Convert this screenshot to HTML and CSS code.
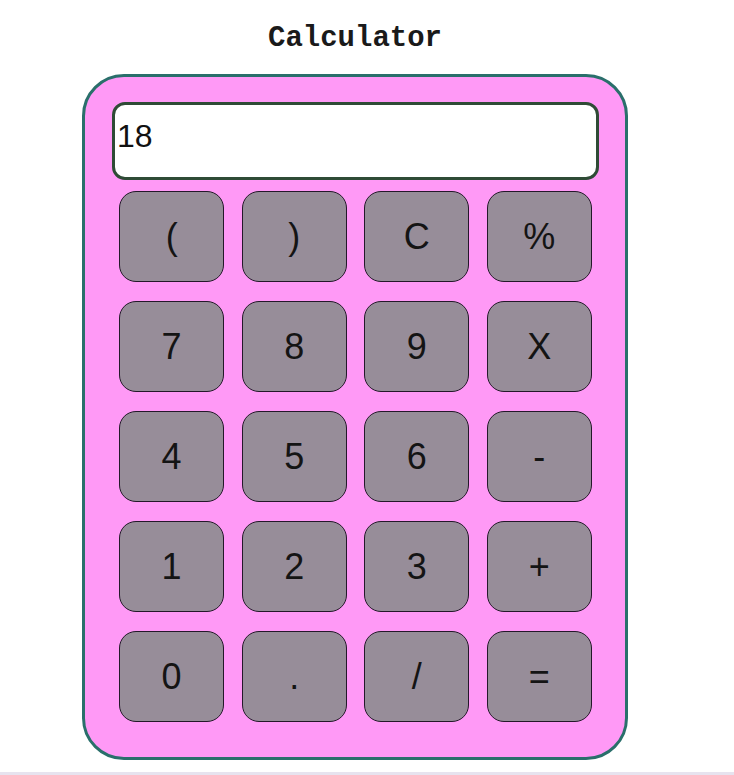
FILE: index.html
```html
<!DOCTYPE html>
<html lang="en">
<head>
<meta charset="utf-8">
<title>Calculator</title>
<link rel="stylesheet" href="styles.css">
</head>
<body>
<div class="page">
  <h1 class="title">Calculator</h1>
  <div class="calc">
    <div class="display">18</div>
    <div class="keys">
      <button class="key">(</button>
      <button class="key">)</button>
      <button class="key">C</button>
      <button class="key">%</button>
      <button class="key">7</button>
      <button class="key">8</button>
      <button class="key">9</button>
      <button class="key">X</button>
      <button class="key">4</button>
      <button class="key">5</button>
      <button class="key">6</button>
      <button class="key">-</button>
      <button class="key">1</button>
      <button class="key">2</button>
      <button class="key">3</button>
      <button class="key">+</button>
      <button class="key">0</button>
      <button class="key">.</button>
      <button class="key">/</button>
      <button class="key">=</button>
    </div>
  </div>
</div>
<div class="bar"></div>
</body>
</html>
```
FILE: styles.css
```css
html, body {
  margin: 0;
  padding: 0;
  background: #ffffff;
  overflow: hidden;
}
body {
  font-family: "Liberation Sans", Arial, sans-serif;
}
.page {
  width: 710px;
  display: flex;
  flex-direction: column;
  align-items: center;
  padding-top: 22px;
}
.title {
  margin: 0;
  font-family: "Liberation Mono", "Courier New", monospace;
  font-weight: bold;
  font-size: 29px;
  line-height: 34px;
  color: #1a1a1a;
}
.calc {
  margin-top: 18px;
  width: 546px;
  height: 686px;
  box-sizing: border-box;
  border: 3px solid #2a6f6b;
  border-radius: 42px;
  background: #ff99f6;
  padding: 25px 26px 35px 27px;
  display: flex;
  flex-direction: column;
}
.display {
  height: 78px;
  box-sizing: border-box;
  border: 3px solid #2f4b36;
  border-radius: 13px;
  background: #ffffff;
  padding: 13px 2px;
  font-family: "Liberation Sans", Arial, sans-serif;
  font-size: 32px;
  line-height: 36px;
  color: #111111;
}
.keys {
  margin: 11px 7px 0 7px;
  display: grid;
  grid-template-columns: repeat(4, 1fr);
  grid-auto-rows: 91px;
  column-gap: 17.3px;
  row-gap: 19px;
}
.key {
  margin: 0;
  padding: 0;
  background: #978d99;
  border: 1.5px solid #24182a;
  border-radius: 17px;
  font-family: "Liberation Sans", Arial, sans-serif;
  font-size: 36px;
  color: #141414;
  display: flex;
  align-items: center;
  justify-content: center;
}
.bar {
  margin-top: 12px;
  height: 3px;
  background: #e7e3ef;
}
```
